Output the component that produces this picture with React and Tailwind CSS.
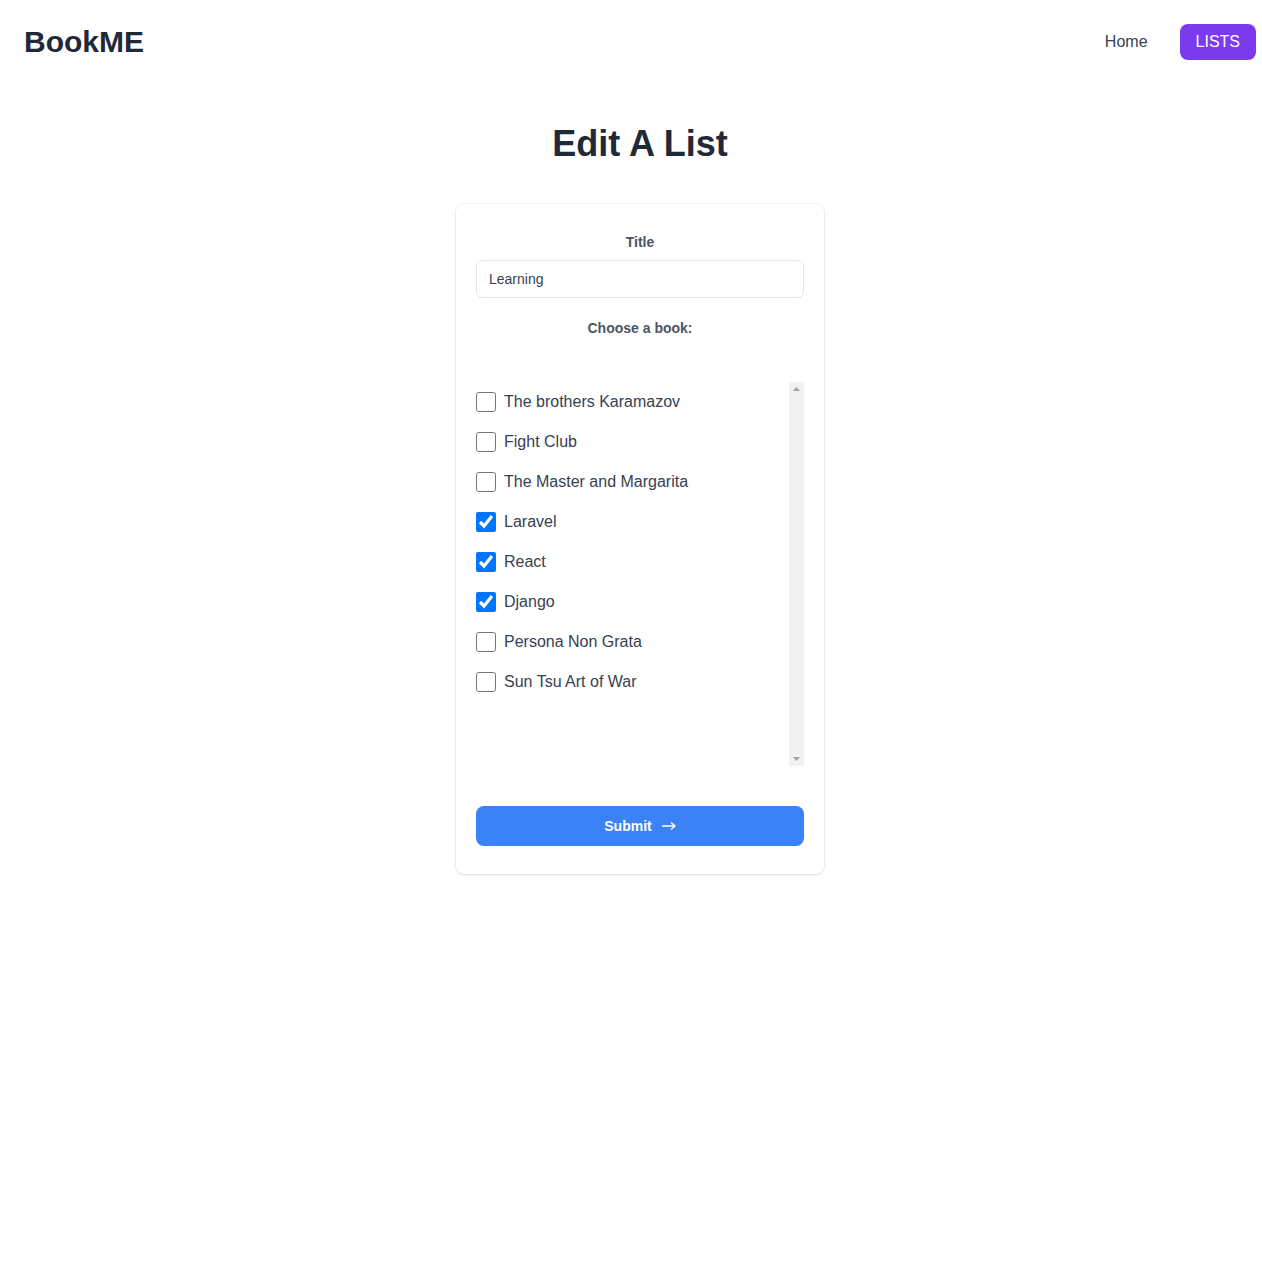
const books = [
  { title: "The brothers Karamazov", checked: false },
  { title: "Fight Club", checked: false },
  { title: "The Master and Margarita", checked: false },
  { title: "Laravel", checked: true },
  { title: "React", checked: true },
  { title: "Django", checked: true },
  { title: "Persona Non Grata", checked: false },
  { title: "Sun Tsu Art of War", checked: false },
];

const App = () => {
  return (
    <div className="w-[1280px] min-h-screen bg-white font-['Liberation_Sans',Arial,sans-serif]">
      {/* NAVBAR */}
      <header className="h-[84px] flex items-center justify-between px-6">
        <a href="/" className="mb-[2px] text-[30px] font-bold text-[#1f2937]">
          BookME
        </a>
        <nav className="flex items-center gap-8">
          <a href="/" className="text-base text-[#374151]">
            Home
          </a>
          <a
            href="/lists"
            className="h-9 px-4 flex items-center rounded-lg bg-[#7c3aed] text-white text-base"
          >
            LISTS
          </a>
        </nav>
      </header>

      {/* MAIN */}
      <main className="flex flex-col items-center">
        <h1 className="mt-10 text-4xl font-bold text-[#1f2937]">Edit A List</h1>

        <form className="mt-10 w-[368px] bg-white rounded-lg shadow-[0_0_0_1px_rgba(0,0,0,0.04),0_1px_3px_rgba(0,0,0,0.1)] px-5 pt-7 pb-7">
          <label className="block text-center text-sm font-bold text-[#4b5563] mb-2">
            Title
          </label>
          <input
            type="text"
            defaultValue="Learning"
            className="w-full h-[38px] px-3 text-sm text-[#374151] border border-[#e5e7eb] rounded-md outline-none"
          />

          <label className="block text-center text-sm font-bold text-[#4b5563] mt-5">
            Choose a book:
          </label>

          {/* Book list + scrollbar track */}
          <div className="mt-11 h-[384px] flex">
            <div className="flex-1 overflow-y-auto">
              {books.map((book) => (
                <label key={book.title} className="h-10 flex items-center gap-2">
                  <input
                    type="checkbox"
                    defaultChecked={book.checked}
                    className="w-5 h-5"
                  />
                  <span className="text-base text-[#374151]">{book.title}</span>
                </label>
              ))}
            </div>
            <div className="w-[15px] bg-[#f1f1f1] flex flex-col items-center justify-between py-[5px]">
              <svg width="7" height="4" viewBox="0 0 7 4">
                <path d="M3.5 0 L7 4 L0 4 Z" fill="#a3a3a3" />
              </svg>
              <svg width="7" height="4" viewBox="0 0 7 4">
                <path d="M0 0 L7 0 L3.5 4 Z" fill="#a3a3a3" />
              </svg>
            </div>
          </div>

          <button
            type="button"
            className="mt-10 w-full h-10 rounded-lg bg-[#3b82f6] text-white text-sm font-bold flex items-center justify-center gap-[10px]"
          >
            Submit
            <svg width="14" height="10" viewBox="0 0 14 10" fill="none">
              <path d="M0 5 H13 M9 1.5 L13 5 L9 8.5" stroke="white" strokeWidth="1.3" />
            </svg>
          </button>
        </form>
      </main>
    </div>
  );
};

export default App;
